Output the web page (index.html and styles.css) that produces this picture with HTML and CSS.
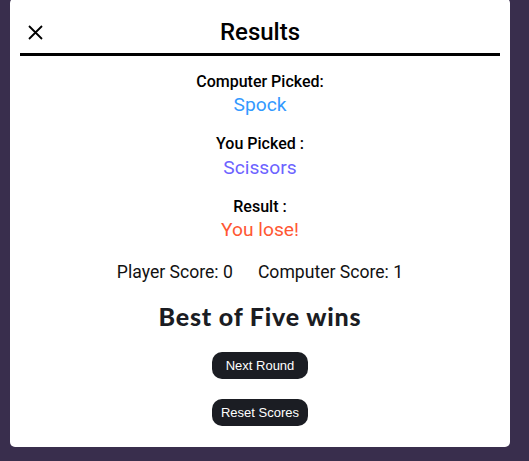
FILE: index.html
```html
<!DOCTYPE html>
<html lang="en">
<head>
<meta charset="utf-8">
<title>Results</title>
<link rel="stylesheet" href="styles.css">
</head>
<body>
<div class="modal">
  <div class="modal-header">
    <button class="close" aria-label="Close">
      <svg width="15" height="15" viewBox="0 0 15 15"><path d="M1 1 L14 14 M14 1 L1 14" stroke="#000" stroke-width="1.8" fill="none"/></svg>
    </button>
    <h1 class="title">Results</h1>
    <span></span>
  </div>
  <div class="modal-body">
    <div class="pick">
      <div class="label">Computer Picked:</div>
      <div class="value spock">Spock</div>
    </div>
    <div class="pick">
      <div class="label">You Picked :</div>
      <div class="value scissors">Scissors</div>
    </div>
    <div class="pick">
      <div class="label">Result :</div>
      <div class="value lose">You lose!</div>
    </div>
    <div class="scores">
      <span>Player Score: 0</span>
      <span>Computer Score: 1</span>
    </div>
    <h2 class="best">Best of Five wins</h2>
    <button class="btn">Next Round</button>
    <button class="btn">Reset Scores</button>
  </div>
</div>
</body>
</html>
```
FILE: styles.css
```css
html, body {
  margin: 0;
  padding: 0;
  background: #392e4d;
  height: 100%;
  overflow: hidden;
}
body {
  font-family: Roboto, "Liberation Sans", sans-serif;
  color: #000;
}
.modal {
  width: 480px;
  margin: -2px 0 0 10px;
  padding: 0 10px 21px;
  background: #fff;
  border-radius: 5px;
}
.modal-header {
  display: grid;
  grid-template-columns: 1fr auto 1fr;
  align-items: center;
  padding: 20px 0 7px;
  border-bottom: 3px solid #000;
}
.close {
  justify-self: start;
  margin-left: 8px;
  padding: 0;
  border: 0;
  background: none;
  width: 15px;
  height: 15px;
  display: flex;
}
.title {
  margin: 0;
  font-size: 24px;
  font-weight: 500;
  line-height: 28px;
}
.modal-body {
  display: flex;
  flex-direction: column;
  align-items: center;
  padding-top: 17px;
}
.pick {
  display: flex;
  flex-direction: column;
  align-items: center;
  margin-bottom: 18.5px;
}
.label {
  font-size: 16px;
  font-weight: 500;
  line-height: 18.75px;
}
.value {
  font-size: 19.2px;
  line-height: 22.5px;
  margin-top: 2.5px;
}
.spock { color: #3399ff; }
.scissors { color: #6c63ff; }
.lose { color: #ff5733; }
.scores {
  display: flex;
  gap: 25px;
  font-size: 17.6px;
  line-height: 21px;
  margin-top: 2px;
  color: #111;
}
.best {
  margin: 18px 0 0;
  font-family: "Comic Sans MS", Lato, sans-serif;
  font-weight: 900;
  font-size: 25px;
  letter-spacing: 0.8px;
  line-height: 30px;
  color: #1b1d23;
}
.btn {
  width: 96px;
  height: 27px;
  margin-top: 20px;
  padding: 0;
  border: 0;
  border-radius: 10px;
  background: #1b1d23;
  color: #fff;
  font-family: "Liberation Sans", Arial, sans-serif;
  font-size: 13px;
}
.best + .btn {
  margin-top: 21px;
}
```
